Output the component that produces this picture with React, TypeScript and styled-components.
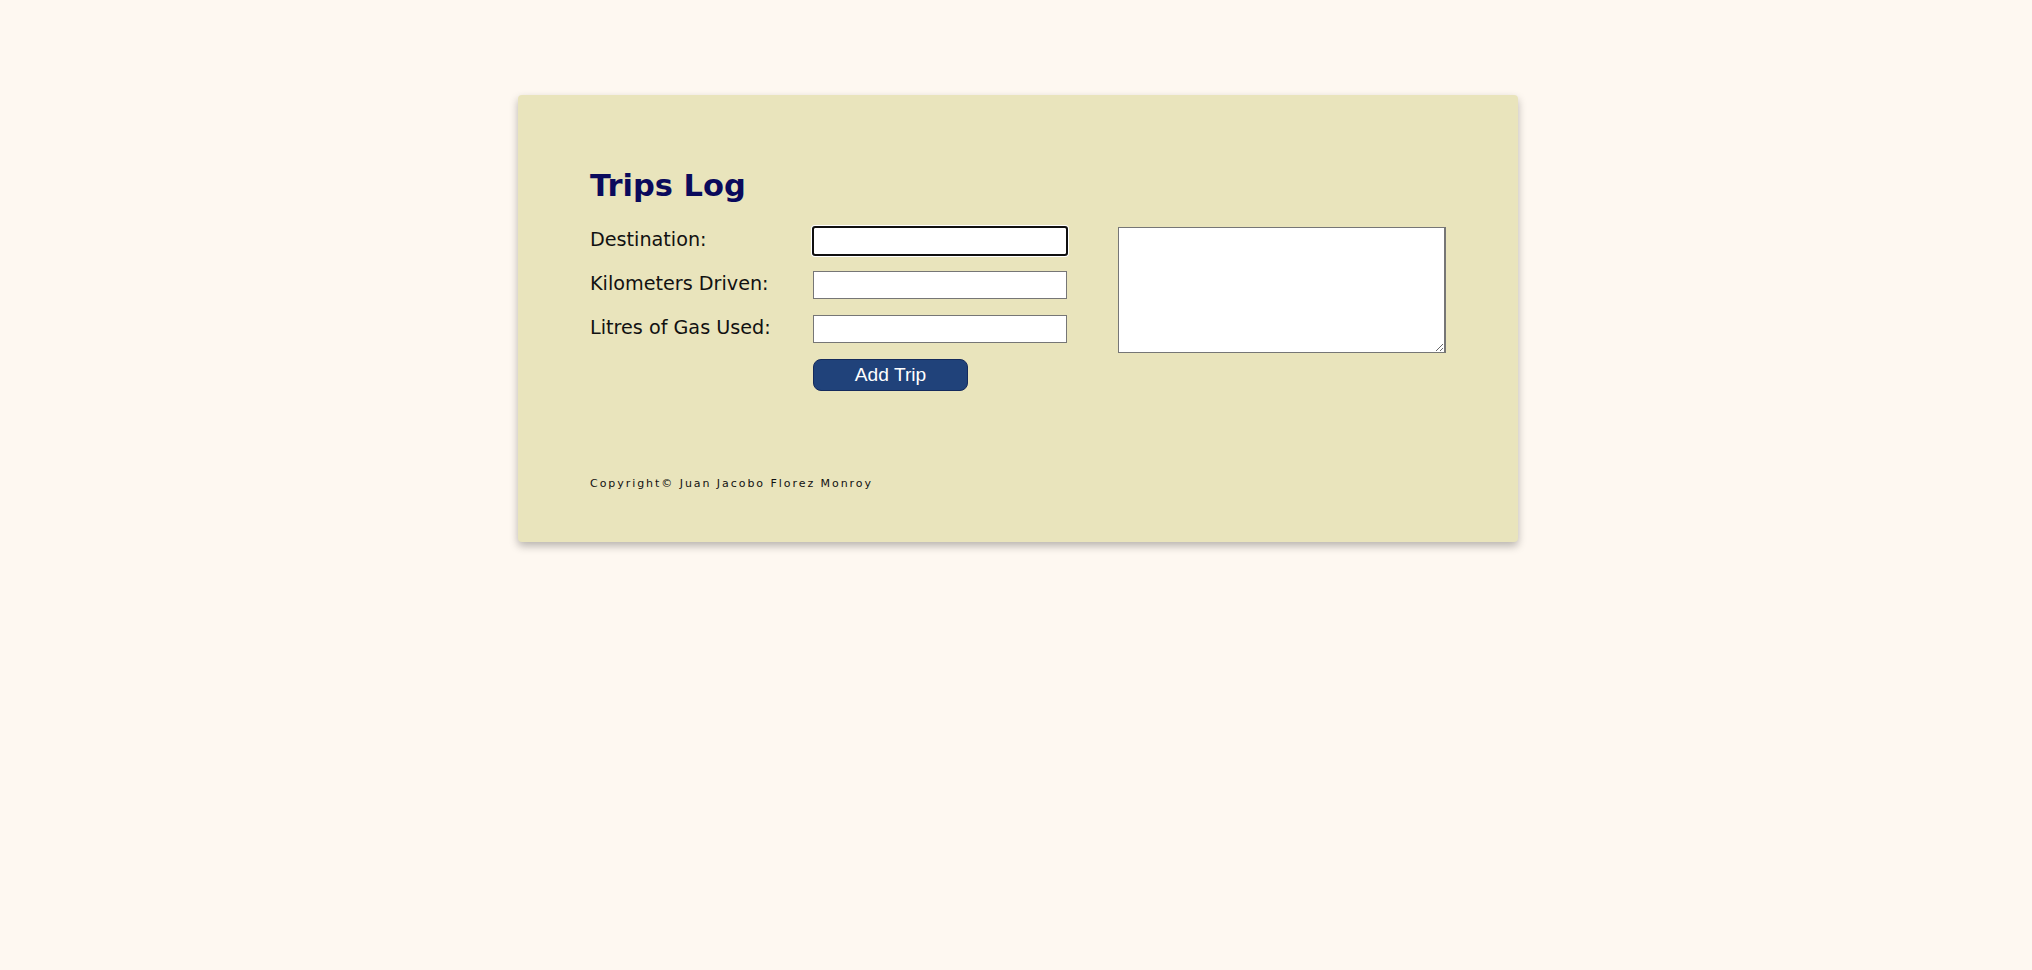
import React from "react";
import styled, { createGlobalStyle } from "styled-components";

const Global = createGlobalStyle`
  html, body { margin: 0; padding: 0; }
  body {
    background: #fef8f1;
    font-family: "DejaVu Sans", Verdana, sans-serif;
    min-height: 970px;
  }
`;

const Page = styled.div`
  padding-top: 95px;
  padding-left: 4px;
  display: flex;
  justify-content: center;
`;

const Card = styled.main`
  width: 1000px;
  box-sizing: border-box;
  background: #e9e4bc;
  border-radius: 4px;
  box-shadow: 0 4px 8px rgba(0, 0, 0, 0.28);
  padding: 74px 71px 52px 72px;
`;

const Title = styled.h1`
  margin: 0 0 24px 0;
  font-family: "DejaVu Sans", Verdana, sans-serif;
  font-weight: bold;
  font-size: 30.5px;
  line-height: 34px;
  color: #0a0a5c;
`;

const Form = styled.form`
  display: grid;
  grid-template-columns: 223px 254px 51px 328px;
  grid-auto-rows: 28px;
  row-gap: 16px;
  align-items: center;
`;

const Label = styled.label<{ $row: number }>`
  grid-column: 1;
  grid-row: ${(p) => p.$row};
  white-space: nowrap;
  font-family: "DejaVu Sans", Verdana, sans-serif;
  font-size: 19.2px;
  line-height: 22px;
  margin-top: -2px;
  color: #111;
`;

const Input = styled.input<{ $row: number; $focused?: boolean }>`
  grid-column: 2;
  grid-row: ${(p) => p.$row};
  box-sizing: border-box;
  width: 254px;
  height: 28px;
  margin: 0;
  border: 1px solid #767676;
  background: #fff;
  border-radius: ${(p) => (p.$focused ? "2px" : "0")};
  outline: ${(p) => (p.$focused ? "2px solid #101010" : "none")};
  outline-offset: -1px;
  box-shadow: ${(p) => (p.$focused ? "0 0 0 2px #ffffff" : "none")};
`;

const Notes = styled.textarea`
  grid-column: 4;
  grid-row: 1 / span 4;
  align-self: start;
  box-sizing: border-box;
  width: 328px;
  height: 126px;
  margin: 0;
  border: 1px solid #767676;
  border-right-width: 2px;
  background: #fff;
  resize: both;
  outline: none;
`;

const Button = styled.button`
  grid-column: 2;
  grid-row: 4;
  justify-self: start;
  align-self: start;
  width: 155px;
  height: 32px;
  box-sizing: border-box;
  background: #20427a;
  border: 1px solid #152a5c;
  border-radius: 8px;
  color: #ffffff;
  font-family: "Liberation Sans", Arial, sans-serif;
  font-size: 19.2px;
  padding: 0;
  cursor: pointer;
`;

const Footer = styled.footer`
  margin-top: 90px;
  font-family: "DejaVu Sans", Verdana, sans-serif;
  font-size: 11px;
  letter-spacing: 1.95px;
  color: #111;
`;

export default function App() {
  return (
    <>
      <Global />
      <Page>
        <Card>
          <Title>Trips Log</Title>
          <Form onSubmit={(e) => e.preventDefault()}>
            <Label htmlFor="dest" $row={1}>Destination:</Label>
            <Input id="dest" type="text" $row={1} $focused />
            <Label htmlFor="km" $row={2}>Kilometers Driven:</Label>
            <Input id="km" type="text" $row={2} />
            <Label htmlFor="gas" $row={3}>Litres of Gas Used:</Label>
            <Input id="gas" type="text" $row={3} />
            <Notes />
            <Button type="submit">Add Trip</Button>
          </Form>
          <Footer>Copyright© Juan Jacobo Florez Monroy</Footer>
        </Card>
      </Page>
    </>
  );
}
